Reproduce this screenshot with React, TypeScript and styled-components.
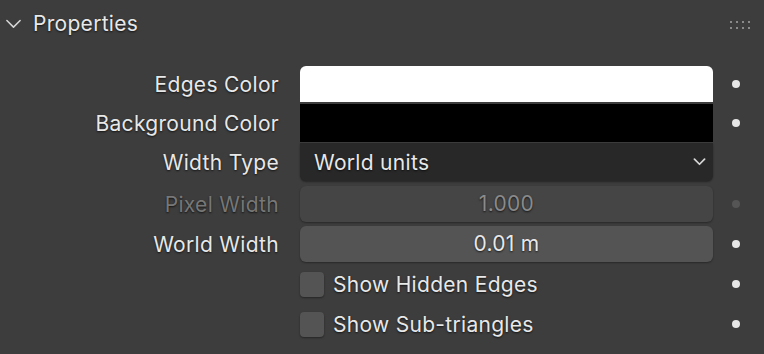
import React from 'react';
import styled, { createGlobalStyle } from 'styled-components';

const GlobalStyle = createGlobalStyle`
  body {
    margin: 0;
    background: #3d3d3d;
    font-family: Inter, "Noto Sans", sans-serif;
  }
`;

const Panel = styled.div`
  width: 764px;
  height: 354px;
  background: #3d3d3d;
  color: #e8e8e8;
  font-size: 21px;
  letter-spacing: 0.3px;
  text-shadow: 0 1px 2px rgba(0, 0, 0, 0.7);
  overflow: hidden;
`;

const Header = styled.div`
  height: 48px;
  display: flex;
  align-items: center;
  padding: 0 14px 0 5px;
  gap: 11px;
`;

const Title = styled.div`
  flex: 1;
  color: #e8e8e8;
  padding-bottom: 2px;
`;

const Grip = styled.div`
  display: grid;
  grid-template-columns: repeat(4, 2px);
  grid-auto-rows: 2px;
  column-gap: 4px;
  row-gap: 4px;
  margin-top: 2px;
`;

const GripDot = styled.span`
  background: #8a8a8a;
`;

const Body = styled.div`
  padding-top: 18px;
  display: flex;
  flex-direction: column;
`;

const Row = styled.div<{ $h: number; $gap?: number }>`
  height: ${(p) => p.$h}px;
  margin-bottom: ${(p) => p.$gap ?? 0}px;
  display: flex;
  align-items: center;
`;

const Label = styled.div<{ $disabled?: boolean }>`
  width: 280px;
  padding-right: 1px;
  box-sizing: border-box;
  text-align: right;
  color: ${(p) => (p.$disabled ? '#777777' : '#e8e8e8')};
  white-space: nowrap;
`;

const FieldCell = styled.div`
  width: 413px;
  height: 100%;
  margin-left: 20px;
  display: flex;
  align-items: center;
`;

const Swatch = styled.div<{ $color: string; $top?: boolean }>`
  width: 100%;
  height: 100%;
  background: ${(p) => p.$color};
  border-radius: ${(p) => (p.$top ? '6px 6px 0 0' : '0')};
`;

const Dropdown = styled.div`
  width: 100%;
  height: 100%;
  background: #282828;
  border-radius: 0 0 6px 6px;
  box-shadow: 0 1px 2px rgba(0, 0, 0, 0.4);
  display: flex;
  align-items: center;
  justify-content: space-between;
  padding: 0 7px 0 14px;
  box-sizing: border-box;
  color: #e8e8e8;
`;

const NumField = styled.div<{ $disabled?: boolean }>`
  width: 100%;
  height: 100%;
  border-radius: 6px;
  background: ${(p) => (p.$disabled ? '#454545' : '#545454')};
  box-shadow: 0 1px 2px rgba(0, 0, 0, 0.35);
  color: ${(p) => (p.$disabled ? '#8a8a8a' : '#e8e8e8')};
  display: flex;
  align-items: center;
  justify-content: center;
  padding-bottom: 1px;
  box-sizing: border-box;
`;

const CheckRow = styled.div`
  display: flex;
  align-items: center;
  gap: 9px;
  margin-left: 20px;
  width: 413px;
`;

const CheckBox = styled.div`
  width: 24px;
  height: 25px;
  border-radius: 4px;
  background: #545454;
  box-shadow: 0 1px 2px rgba(0, 0, 0, 0.4);
`;

const DotCell = styled.div`
  flex: 1;
  display: flex;
  justify-content: center;
  padding-right: 8px;
  padding-left: 2px;
`;

const Dot = styled.span<{ $disabled?: boolean }>`
  width: 8px;
  height: 8px;
  border-radius: 50%;
  background: ${(p) => (p.$disabled ? '#555555' : '#e6e6e6')};
`;

const Chevron = ({ w = 16, stroke = 1.6 }: { w?: number; stroke?: number }) => (
  <svg width={w} height={w * 0.6} viewBox="0 0 16 10" fill="none">
    <path d="M1.5 1.5 L8 8 L14.5 1.5" stroke="#d6d6d6" strokeWidth={stroke} strokeLinecap="round" strokeLinejoin="round" />
  </svg>
);

const App = () => (
  <>
    <GlobalStyle />
    <Panel>
      <Header>
        <Chevron w={17} stroke={1.5} />
        <Title>Properties</Title>
        <Grip>
          {Array.from({ length: 8 }).map((_, i) => (
            <GripDot key={i} />
          ))}
        </Grip>
      </Header>
      <Body>
        <Row $h={36} $gap={2}>
          <Label>Edges Color</Label>
          <FieldCell>
            <Swatch $color="#ffffff" $top />
          </FieldCell>
          <DotCell><Dot /></DotCell>
        </Row>
        <Row $h={38} $gap={1}>
          <Label>Background Color</Label>
          <FieldCell>
            <Swatch $color="#000000" />
          </FieldCell>
          <DotCell><Dot /></DotCell>
        </Row>
        <Row $h={38} $gap={5}>
          <Label>Width Type</Label>
          <FieldCell>
            <Dropdown>
              <span>World units</span>
              <Chevron w={13} stroke={2.2} />
            </Dropdown>
          </FieldCell>
          <DotCell />
        </Row>
        <Row $h={36} $gap={4}>
          <Label $disabled>Pixel Width</Label>
          <FieldCell>
            <NumField $disabled>1.000</NumField>
          </FieldCell>
          <DotCell><Dot $disabled /></DotCell>
        </Row>
        <Row $h={36} $gap={2}>
          <Label>World Width</Label>
          <FieldCell>
            <NumField>0.01 m</NumField>
          </FieldCell>
          <DotCell><Dot /></DotCell>
        </Row>
        <Row $h={40}>
          <Label />
          <CheckRow>
            <CheckBox />
            <span>Show Hidden Edges</span>
          </CheckRow>
          <DotCell><Dot /></DotCell>
        </Row>
        <Row $h={40}>
          <Label />
          <CheckRow>
            <CheckBox />
            <span>Show Sub-triangles</span>
          </CheckRow>
          <DotCell><Dot /></DotCell>
        </Row>
      </Body>
    </Panel>
  </>
);

export default App;
